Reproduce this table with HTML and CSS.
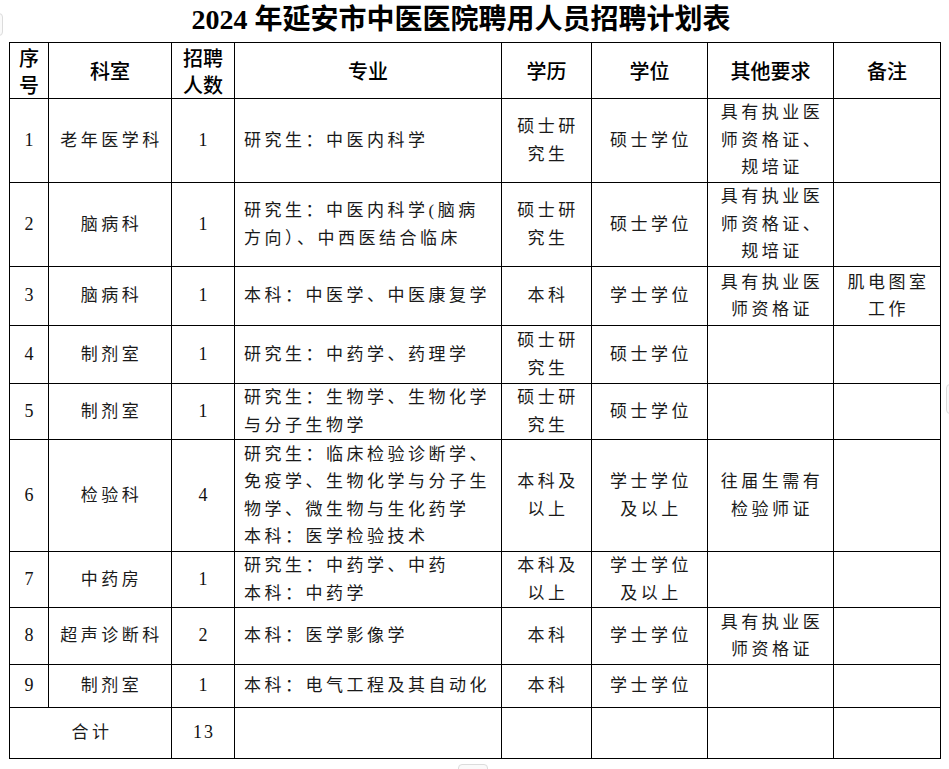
FILE: index.html
```html
<!DOCTYPE html>
<html lang="zh-CN">
<head>
<meta charset="utf-8">
<title>2024年延安市中医医院聘用人员招聘计划表</title>
<link rel="stylesheet" href="styles.css">
</head>
<body>
<h1 class="title">2024 年延安市中医医院聘用人员招聘计划表</h1>
<table class="plan">
  <colgroup>
    <col class="c-no"><col class="c-dept"><col class="c-count"><col class="c-major">
    <col class="c-edu"><col class="c-degree"><col class="c-req"><col class="c-note">
  </colgroup>
  <thead>
    <tr class="h-head">
      <th>序<br>号</th><th>科室</th><th>招聘<br>人数</th><th>专业</th><th>学历</th><th>学位</th><th>其他要求</th><th>备注</th>
    </tr>
  </thead>
  <tbody>
    <tr class="h-84">
      <td class="num">1</td><td>老年医学科</td><td class="num">1</td>
      <td class="major">研究生：中医内科学</td>
      <td>硕士研<br>究生</td><td>硕士学位</td><td>具有执业医<br>师资格证、<br>规培证</td><td></td>
    </tr>
    <tr class="h-84">
      <td class="num">2</td><td>脑病科</td><td class="num">1</td>
      <td class="major">研究生：中医内科学(脑病<br>方向）、中西医结合临床</td>
      <td>硕士研<br>究生</td><td>硕士学位</td><td>具有执业医<br>师资格证、<br>规培证</td><td></td>
    </tr>
    <tr class="h-59">
      <td class="num">3</td><td>脑病科</td><td class="num">1</td>
      <td class="major">本科：中医学、中医康复学</td>
      <td>本科</td><td>学士学位</td><td>具有执业医<br>师资格证</td><td>肌电图室<br>工作</td>
    </tr>
    <tr class="h-58">
      <td class="num">4</td><td>制剂室</td><td class="num">1</td>
      <td class="major">研究生：中药学、药理学</td>
      <td>硕士研<br>究生</td><td>硕士学位</td><td></td><td></td>
    </tr>
    <tr class="h-56">
      <td class="num">5</td><td>制剂室</td><td class="num">1</td>
      <td class="major">研究生：生物学、生物化学<br>与分子生物学</td>
      <td>硕士研<br>究生</td><td>硕士学位</td><td></td><td></td>
    </tr>
    <tr class="h-112">
      <td class="num">6</td><td>检验科</td><td class="num">4</td>
      <td class="major">研究生：临床检验诊断学、<br>免疫学、生物化学与分子生<br>物学、微生物与生化药学<br>本科：医学检验技术</td>
      <td>本科及<br>以上</td><td>学士学位<br>及以上</td><td>往届生需有<br>检验师证</td><td></td>
    </tr>
    <tr class="h-56">
      <td class="num">7</td><td>中药房</td><td class="num">1</td>
      <td class="major">研究生：中药学、中药<br>本科：中药学</td>
      <td>本科及<br>以上</td><td>学士学位<br>及以上</td><td></td><td></td>
    </tr>
    <tr class="h-57">
      <td class="num">8</td><td>超声诊断科</td><td class="num">2</td>
      <td class="major">本科：医学影像学</td>
      <td>本科</td><td>学士学位</td><td>具有执业医<br>师资格证</td><td></td>
    </tr>
    <tr class="h-43">
      <td class="num">9</td><td>制剂室</td><td class="num">1</td>
      <td class="major">本科：电气工程及其自动化</td>
      <td>本科</td><td>学士学位</td><td></td><td></td>
    </tr>
    <tr class="h-51">
      <td colspan="2">合计</td><td class="num">13</td>
      <td></td><td></td><td></td><td></td><td></td>
    </tr>
  </tbody>
</table>
<span class="handle handle-left"></span>
<span class="handle handle-right"></span>
<span class="handle handle-bottom"></span>
</body>
</html>
```

FILE: styles.css
```css
html, body {
  margin: 0;
  padding: 0;
  background: #ffffff;
}

body {
  position: relative;
  width: 949px;
  height: 769px;
  overflow: hidden;
}

.title {
  margin: 0;
  height: 42px;
  padding-right: 27px;
  font-family: "Liberation Serif", "Noto Sans CJK SC", serif;
  font-size: 28px;
  font-weight: 700;
  line-height: 40px;
  text-align: center;
  color: #000;
  white-space: nowrap;
}

.plan {
  margin-left: 9px;
  width: 931px;
  border-collapse: collapse;
  table-layout: fixed;
}

.c-no { width: 39px; }
.c-dept { width: 123px; }
.c-count { width: 63px; }
.c-major { width: 267px; }
.c-edu { width: 90px; }
.c-degree { width: 116px; }
.c-req { width: 126px; }
.c-note { width: 107px; }

.plan th,
.plan td {
  border: 1px solid #000;
  padding: 0 0 0 3px;
  text-align: center;
  vertical-align: middle;
  white-space: nowrap;
  overflow: hidden;
}

.plan th {
  font-family: "Noto Sans CJK SC", sans-serif;
  font-size: 20px;
  font-weight: 500;
  line-height: 27px;
  color: #000;
  padding-left: 0;
}

.plan td {
  font-family: "Liberation Serif", "Noto Sans CJK SC", serif;
  font-size: 17px;
  line-height: 27.5px;
  letter-spacing: 3.5px;
  color: #1a1a1a;
}

.plan td.num {
  font-size: 18px;
  letter-spacing: 2px;
  padding-left: 2px;
  color: #111;
}

.plan td.major {
  text-align: left;
  padding-left: 9px;
}

.h-head { height: 56px; }
.h-84 { height: 84px; }
.h-59 { height: 59px; }
.h-58 { height: 58px; }
.h-57 { height: 57px; }
.h-56 { height: 56px; }
.h-112 { height: 112px; }
.h-43 { height: 43px; }
.h-51 { height: 51px; }

/* faint window resize handles visible at the edges of the capture */
.handle {
  position: absolute;
  border: 1px solid #dcdcdc;
  border-radius: 4px;
  background: #fafafa;
}

.handle-left {
  left: -6px;
  top: 13px;
  width: 7px;
  height: 21px;
}

.handle-right {
  left: 946px;
  top: 384px;
  width: 8px;
  height: 28px;
}

.handle-bottom {
  left: 458px;
  top: 764px;
  width: 28px;
  height: 10px;
}
```
